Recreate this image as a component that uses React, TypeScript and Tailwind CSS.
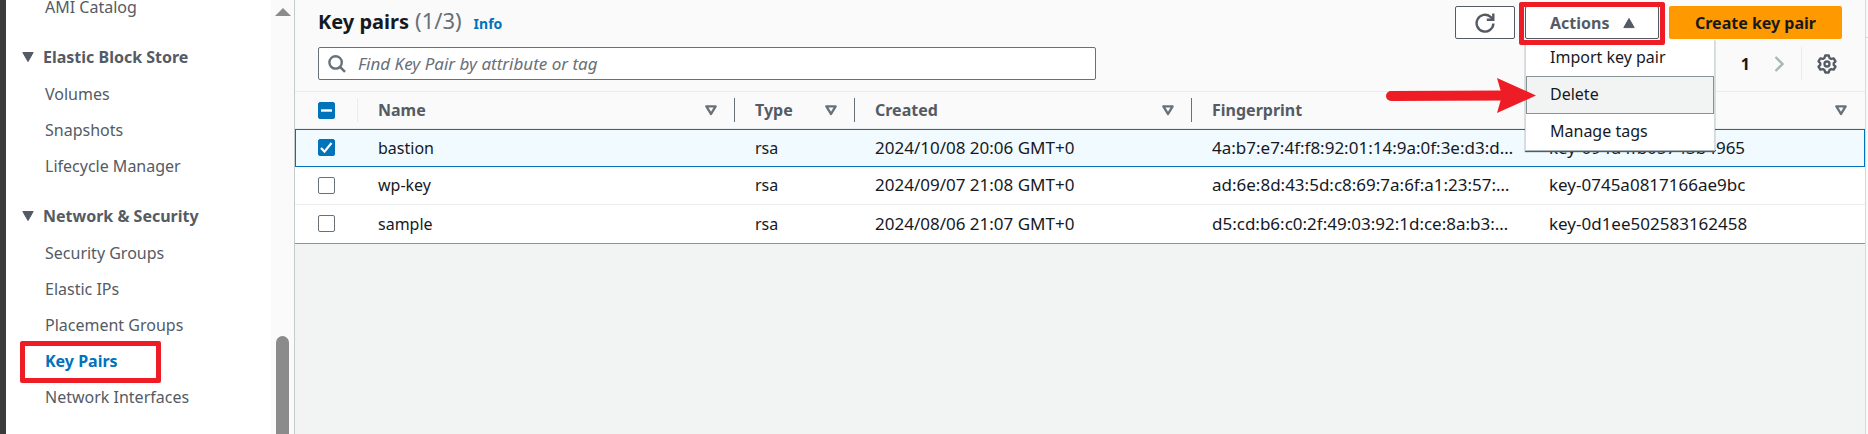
import React, { useEffect, useRef } from "react";

const SIDEBAR: { title?: string; items: string[] }[] = [
  { items: ["AMI Catalog"] },
  { title: "Elastic Block Store", items: ["Volumes", "Snapshots", "Lifecycle Manager"] },
  {
    title: "Network & Security",
    items: ["Security Groups", "Elastic IPs", "Placement Groups", "Key Pairs", "Network Interfaces"],
  },
];

const ROWS = [
  { name: "bastion", type: "rsa", created: "2024/10/08 20:06 GMT+0", fp: "4a:b7:e7:4f:f8:92:01:14:9a:0f:3e:d3:d…", id: "key-094d4fb05743b4965", selected: true },
  { name: "wp-key", type: "rsa", created: "2024/09/07 21:08 GMT+0", fp: "ad:6e:8d:43:5d:c8:69:7a:6f:a1:23:57:…", id: "key-0745a0817166ae9bc", selected: false },
  { name: "sample", type: "rsa", created: "2024/08/06 21:07 GMT+0", fp: "d5:cd:b6:c0:2f:49:03:92:1d:ce:8a:b3:…", id: "key-0d1ee502583162458", selected: false },
];

function SortIcon() {
  return (
    <svg className="h-3 w-3 shrink-0" viewBox="0 0 12 12" aria-hidden="true">
      <path d="M1.4 2.4h9.2L6 10z" fill="none" stroke="#687078" strokeWidth="2.4" strokeLinejoin="round" />
    </svg>
  );
}

function NavItem({ label }: { label: string }) {
  const active = label === "Key Pairs";
  return (
    <li className="relative flex h-9 items-center pl-[39px]">
      {active && <span className="absolute -top-[2px] left-[14px] h-[42px] w-[141px] rounded-xs border-5 border-[#ee1c25]" />}
      <a href="#" className={active ? "font-bold text-[#0073bb]" : "text-[#545b64]"}>
        {label}
      </a>
    </li>
  );
}

function Sidebar() {
  return (
    <aside className="flex w-[294px] shrink-0 border-l-6 border-l-[#3b3b3b] bg-white">
      <nav className="-mt-[11px] min-w-0 flex-1">
        {SIDEBAR.map((group, i) => (
          <section key={i} className="mb-3">
            {group.title && (
              <h2 className="flex h-[39px] items-center gap-[9px] pl-4 font-bold text-[#545b64]">
                <svg className="h-3 w-3" viewBox="0 0 12 12" aria-hidden="true">
                  <path d="M.8 1.5h10.4L6 10.6z" fill="#545b64" stroke="#545b64" strokeLinejoin="round" />
                </svg>
                {group.title}
              </h2>
            )}
            <ul>
              {group.items.map((item) => (
                <NavItem key={item} label={item} />
              ))}
            </ul>
          </section>
        ))}
      </nav>
      <div className="flex w-[23px] flex-col items-center justify-between bg-[#fafafa] pt-2">
        <svg className="h-2 w-4" viewBox="0 0 16 8" aria-hidden="true">
          <path d="M8 0l8 8H0z" fill="#8b8b8b" />
        </svg>
        <span className="h-[98px] w-[13px] rounded-t-full bg-[#8b8b8b]" />
      </div>
    </aside>
  );
}

function Check({ label, checked = false, mixed = false }: { label: string; checked?: boolean; mixed?: boolean }) {
  const ref = useRef<HTMLInputElement>(null);
  useEffect(() => {
    if (ref.current) ref.current.indeterminate = mixed;
  }, [mixed]);
  return (
    <span className="relative block h-[17px] w-[17px]">
      <input
        ref={ref}
        type="checkbox"
        aria-label={label}
        defaultChecked={checked}
        className="peer block h-[17px] w-[17px] appearance-none rounded-xs border border-[#687078] bg-white checked:border-[#0073bb] checked:bg-[#0073bb] indeterminate:border-[#0073bb] indeterminate:bg-[#0073bb]"
      />
      <svg className="pointer-events-none absolute inset-0 hidden h-[17px] w-[17px] peer-checked:block" viewBox="0 0 17 17" aria-hidden="true">
        <path d="M3 9l3.5 3.7L13.5 4" fill="none" stroke="#fff" strokeWidth="2.2" />
      </svg>
      <svg className="pointer-events-none absolute inset-0 hidden h-[17px] w-[17px] peer-indeterminate:block" viewBox="0 0 17 17" aria-hidden="true">
        <path d="M3 8.5h11" stroke="#fff" strokeWidth="2.4" />
      </svg>
    </span>
  );
}

function ActionsMenu() {
  return (
    <div className="relative">
      <button className="flex h-[33px] w-[134px] items-center gap-[13px] rounded-xs border border-[#545b64] bg-white pl-6 font-bold text-[#545b64]">
        Actions
        <svg className="h-3 w-3" viewBox="0 0 12 12" aria-hidden="true">
          <path d="M.8 10.6h10.4L6 1.5z" fill="#545b64" stroke="#545b64" strokeLinejoin="round" />
        </svg>
      </button>
      <ul className="absolute top-[34px] left-0 z-10 w-[190px] border-x border-b border-x-[#d5dbdb] border-b-[#aab7b8] bg-white text-[#16191f] shadow-[0_1px_1px_#545b64]">
        <li className="flex h-9 items-center pb-[2px] pl-6">Import key pair</li>
        <li className="flex h-[38px] items-center border border-[#879596] bg-[#f2f3f3] pb-[2px] pl-[23px]">Delete</li>
        <li className="flex h-9 items-center pb-[2px] pl-6">Manage tags</li>
      </ul>
      <span className="absolute -top-1 -left-[6px] z-20 h-[43px] w-[146px] rounded-xs border-5 border-[#ee1c25]" />
      <svg className="absolute top-[72px] -left-[139px] z-20 h-[35px] w-[150px]" viewBox="0 0 150 35" aria-hidden="true">
        <path d="M5 18L118 17.5" stroke="#ee1c25" strokeWidth="10" strokeLinecap="round" />
        <path d="M111 0l39 17.5L111 35l5-17.5z" fill="#ee1c25" />
      </svg>
    </div>
  );
}

function HeadCell({ label, divider = true, sort = true }: { label: string; divider?: boolean; sort?: boolean }) {
  return (
    <th className="relative p-0 text-left font-bold text-[#545b64]">
      <div className="flex h-9 items-center justify-between pr-[18px] pl-5">
        <span>{label}</span>
        {sort && <SortIcon />}
      </div>
      {divider && <span className="absolute top-[6px] right-0 h-6 w-px bg-[#687078]" />}
    </th>
  );
}

export default function App() {
  return (
    <div className="flex min-h-screen overflow-hidden bg-[#f2f3f3] font-['Noto_Sans',sans-serif] text-[16px] leading-6 text-[#16191f]">
      <Sidebar />
      <main className="min-w-0 flex-1 border-l border-[#c4cccc]">
        <section className="border-b border-b-[#879596] bg-[#fafafa]">
          <header className="flex h-[39px] items-start justify-between pr-[23px] pl-[23px]">
            <h1 className="flex items-baseline pt-[6px] text-[20px] leading-7 font-bold">
              Key pairs
              <span className="ml-[6px] text-[22px] font-normal text-[#687078]">(1/3)</span>
              <a href="#" className="ml-3 text-[14px] font-bold text-[#0073bb]">
                Info
              </a>
            </h1>
            <div className="flex gap-[10px] pt-[6px]">
              <button aria-label="Refresh" className="flex h-[33px] w-[60px] items-center justify-center rounded-xs border border-[#545b64] bg-white">
                <svg className="h-5 w-5" viewBox="0 0 20 20" fill="none" stroke="#545b64" strokeWidth="2.4" aria-hidden="true">
                  <path d="M18.4 10.5A8.4 8.4 0 1 1 15.5 3.8L18 6.2" />
                  <path d="M18.3 .5v6.3h-6.5" />
                </svg>
              </button>
              <ActionsMenu />
              <button className="h-[33px] w-[173px] rounded-xs bg-[#ff9900] font-bold text-[#16191f]">Create key pair</button>
            </div>
          </header>
          <div className="flex h-[53px] items-start justify-between border-b border-[#eaeded] pt-2 pr-7 pl-[23px]">
            <label className="relative block w-[50%] max-w-[778px] grow">
              <svg className="absolute top-2 left-[10px] h-[18px] w-[18px]" viewBox="0 0 18 18" fill="none" stroke="#687078" strokeWidth="2.4" aria-hidden="true">
                <circle cx="7.6" cy="7.4" r="6.2" />
                <path d="M12 11.8l5 5" />
              </svg>
              <input
                aria-label="Find Key Pair"
                placeholder="Find Key Pair by attribute or tag"
                className="block h-[33px] w-full rounded-xs border border-[#687078] bg-white pl-[39px] text-[17px] italic placeholder:text-[#687078]"
              />
            </label>
            <div className="flex h-[33px] items-center">
              <svg className="mr-[26px] h-4 w-[10px]" viewBox="0 0 10 16" fill="none" stroke="#aab7b8" strokeWidth="2.4" aria-hidden="true">
                <path d="M8.5 1L1.5 8l7 7" />
              </svg>
              <span className="font-bold">1</span>
              <svg className="ml-6 h-4 w-[10px]" viewBox="0 0 10 16" fill="none" stroke="#aab7b8" strokeWidth="2.4" aria-hidden="true">
                <path d="M1.5 1l7 7-7 7" />
              </svg>
              <span className="mr-[15px] ml-[17px] h-full w-px bg-[#eaeded]" />
              <svg className="h-5 w-5" viewBox="0 0 20 20" fill="none" stroke="#545b64" strokeWidth="2.3" strokeLinejoin="round" aria-hidden="true">
                <circle cx="10" cy="10" r="2.5" />
                <path d="M8.2 1.5h3.6l.7 2.4 1.7 1 2.5-.6 1.8 3.1-1.8 1.7v1.8l1.8 1.7-1.8 3.1-2.5-.6-1.7 1-.7 2.4H8.2l-.7-2.4-1.7-1-2.5.6-1.8-3.1 1.8-1.7V9.1L1.5 7.4l1.8-3.1 2.5.6 1.7-1z" />
              </svg>
            </div>
          </div>
          <table className="w-full table-fixed border-collapse">
            <colgroup>
              <col className="w-[63px]" />
              <col className="w-[377px]" />
              <col className="w-[120px]" />
              <col className="w-[337px]" />
              <col className="w-[337px]" />
              <col />
            </colgroup>
            <thead>
              <tr className="border-b border-[#eaeded]">
                <th className="relative p-0 pl-[23px]">
                  <Check label="Select all" mixed />
                  <span className="absolute top-[6px] right-0 h-6 w-px bg-[#eaeded]" />
                </th>
                <HeadCell label="Name" />
                <HeadCell label="Type" />
                <HeadCell label="Created" />
                <HeadCell label="Fingerprint" sort={false} divider={false} />
                <HeadCell label="" divider={false} />
              </tr>
            </thead>
            <tbody>
              {ROWS.map((r) => (
                <tr
                  key={r.name}
                  className={
                    r.selected
                      ? "h-[38px] bg-[#f1faff] outline outline-[#0073bb] -outline-offset-1"
                      : "h-[38px] border-b border-[#eaeded] bg-white last:border-b-0"
                  }
                >
                  <td className="p-0 pl-[23px]">
                    <Check label={"Select " + r.name} checked={r.selected} />
                  </td>
                  <td className="p-0 pl-5">{r.name}</td>
                  <td className="p-0 pl-5">{r.type}</td>
                  <td className="p-0 pl-5 text-[17px]">{r.created}</td>
                  <td className="p-0 pl-5 text-[17px] whitespace-nowrap">{r.fp}</td>
                  <td className="p-0 pl-5 text-[17px]">{r.id}</td>
                </tr>
              ))}
            </tbody>
          </table>
        </section>
      </main>
      <aside className="w-[3px] border-l border-[#d5dbdb] bg-[#fafafa]">
        <div className="h-[38px] border-b border-[#d5dbdb]" />
      </aside>
    </div>
  );
}
